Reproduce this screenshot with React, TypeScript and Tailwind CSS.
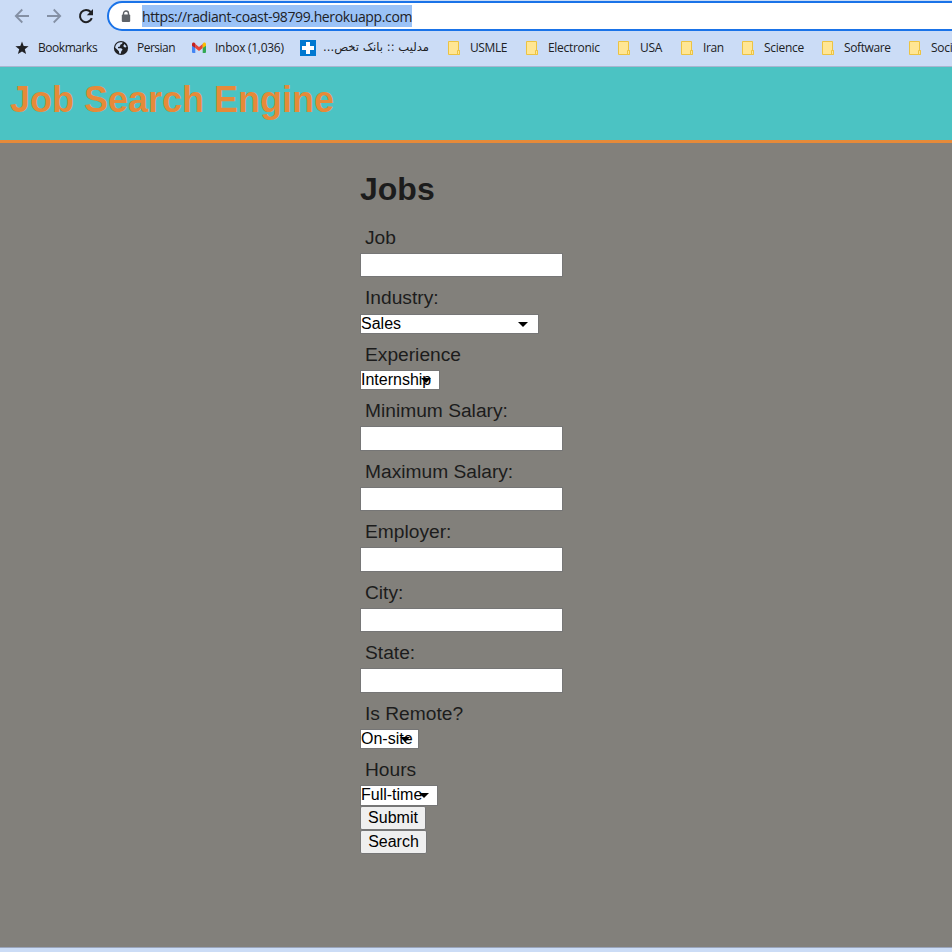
import React from "react";

const folders = [
  { name: "USMLE", cls: "w-[78px]", track: "tracking-[-0.4px]" },
  { name: "Electronic", cls: "w-[92px]", track: "tracking-[-0.3px]" },
  { name: "USA", cls: "w-[63px]", track: "tracking-[-0.3px]" },
  { name: "Iran", cls: "w-[61px]", track: "tracking-[-0.4px]" },
  { name: "Science", cls: "w-[80px]", track: "tracking-[-0.3px]" },
  { name: "Software", cls: "w-[87px]", track: "tracking-[-0.4px]" },
  { name: "Soci", cls: "w-[43px]", track: "tracking-[-0.3px]" },
];

function FolderIcon() {
  return (
    <svg width="13" height="14" viewBox="0 0 13 14" className="shrink-0">
      <path d="M.5 .5h10v9h1v4H.5z" fill="#ffe694" stroke="#ecc342" />
      <path d="M9.5 13.5v-4h2v4z" fill="#ffe694" stroke="#ecc342" />
    </svg>
  );
}

function BrowserBar() {
  return (
    <div className="h-[67px] shrink-0 overflow-hidden border-b border-[#a9b5cf] bg-[#cbdcf6] font-['Open_Sans','Noto_Sans',sans-serif] text-[#202124]">
      <div className="flex h-8 items-center pl-[14px]">
        <svg className="shrink-0" width="16" height="16" viewBox="0 0 16 16" fill="none" stroke="#8490a4" strokeWidth="1.8">
          <path d="M15 8H2M8.3 1.5 1.8 8l6.5 6.5" />
        </svg>
        <svg className="ml-4 shrink-0" width="16" height="16" viewBox="0 0 16 16" fill="none" stroke="#8490a4" strokeWidth="1.8">
          <path d="M1 8h13M7.7 1.5 14.2 8l-6.5 6.5" />
        </svg>
        <svg className="ml-4 shrink-0" width="16" height="16" viewBox="0 0 16 16" fill="none">
          <path d="M13.8 10.2A6.1 6.1 0 1 1 12.7 4L14 5.5" stroke="#202124" strokeWidth="2" />
          <path d="M15 1v6.2H8.8z" fill="#202124" />
        </svg>
        <div className="ml-[13px] flex h-[30px] w-[1000px] shrink-0 items-center rounded-full border-2 border-[#1a73e8] bg-white pl-3">
          <svg className="shrink-0" width="10" height="13" viewBox="0 0 10 13">
            <path d="M2.5 5V3.5a2.5 2.5 0 0 1 5 0V5" fill="none" stroke="#5f6368" strokeWidth="1.4" />
            <rect x=".8" y="4.5" width="8.4" height="7.5" rx="1" fill="#5f6368" />
          </svg>
          <span className="ml-[11px] flex h-[22px] w-[270px] items-center bg-[#9ac2f7] text-[14px] tracking-[-0.37px] whitespace-nowrap">
            https://radiant-coast-98799.herokuapp.com
          </span>
        </div>
      </div>
      <div className="flex h-8 items-center pl-[15px] text-[12px] whitespace-nowrap">
        <svg width="14" height="14" viewBox="0 0 14 14" className="shrink-0">
          <path d="m7 .6 1.7 4.5 4.9.2-3.8 3 1.3 4.8L7 10.4l-4.1 2.7 1.3-4.8-3.8-3 4.9-.2z" fill="#202124" />
        </svg>
        <span className="ml-[9px] w-[75px] shrink-0 tracking-[-0.45px]">Bookmarks</span>
        <svg width="16" height="16" viewBox="0 0 16 16" className="shrink-0">
          <circle cx="8" cy="8" r="7.1" fill="#202124" />
          <path d="M7.500 2.300h2l-.3 1.500-1.900.9-.3 1.900-2 .4v1.300h3.300l1.300 1.400-1.200 1.300-.7 2.800-1.500-.4-.3-2.200L3.900 9.200 2.200 7.800C2.300 4.900 4.500 2.600 7.500 2.300zM11.500 4l2 2.400-.7 1.100-2-.4-.4-1.600z" fill="#cbdcf6" />
        </svg>
        <span className="ml-2 w-[55px] shrink-0 tracking-[-0.5px]">Persian</span>
        <svg width="14" height="12" viewBox="0 0 14 12" className="shrink-0">
          <path d="M0 2h3.3v9H1a1 1 0 0 1-1-1z" fill="#4285f4" />
          <path d="M10.7 2H14v8a1 1 0 0 1-1 1h-2.300z" fill="#34a853" />
          <path d="M3.300 2 7 5l3.700-3v4L7 9 3.300 6z" fill="#ea4335" />
          <path d="M0 2.100C0 .6 1.600 0 2.700 1l.6.500V6L0 3.700z" fill="#c5221f" />
          <path d="M14 2.100C14 .6 12.400 0 11.300 1l-.6.500V6L14 3.700z" fill="#fbbc04" />
        </svg>
        <span className="ml-[9px] w-[85px] shrink-0 tracking-[-0.28px]">Inbox (1,036)</span>
        <svg width="16" height="16" viewBox="0 0 16 16" className="shrink-0">
          <path fill="#0078d0" d="M0 0h16v16H0z" />
          <path fill="#fff" d="M6 2h4v4h4v4h-4v4H6v-4H2V6h4z" />
        </svg>
        <span dir="rtl" className="ml-2 w-[105px] shrink-0 text-right font-['DejaVu_Sans',sans-serif] text-[11.600px]">
          مدلیب :: بانک تخص...
        </span>
        <div className="ml-[19px] flex">
          {folders.map((f) => (
            <div key={f.name} className={"flex shrink-0 items-center " + f.cls}>
              <FolderIcon />
              <span className={"ml-[9px] " + f.track}>{f.name}</span>
            </div>
          ))}
        </div>
      </div>
    </div>
  );
}

type FieldDef = { label: string; height: string; box: string; value?: string; arrow?: string };

const fields: FieldDef[] = [
  { label: "Job", height: "h-[61px]", box: "w-[203px] h-[24px]" },
  { label: "Industry:", height: "h-[56px]", box: "w-[179px] h-[20px]", value: "Sales", arrow: "right-[10px]" },
  { label: "Experience", height: "h-[56px]", box: "w-[80px] h-[20px]", value: "Internship", arrow: "right-[8px]" },
  { label: "Minimum Salary:", height: "h-[61px]", box: "w-[203px] h-[25px]" },
  { label: "Maximum Salary:", height: "h-[60px]", box: "w-[203px] h-[24px]" },
  { label: "Employer:", height: "h-[61px]", box: "w-[203px] h-[25px]" },
  { label: "City:", height: "h-[60px]", box: "w-[203px] h-[24px]" },
  { label: "State:", height: "h-[61px]", box: "w-[203px] h-[25px]" },
  { label: "Is Remote?", height: "h-[56px]", box: "w-[59px] h-[20px]", value: "On-site", arrow: "right-[8px]" },
  { label: "Hours", height: "h-[48px]", box: "w-[78px] h-[21px]", value: "Full-time", arrow: "right-[8px]" },
];

function Field({ label, height, box, value, arrow }: FieldDef) {
  const leading = label === "Industry:" ? "leading-[22px]" : "leading-[24px]";
  return (
    <div className={height}>
      <label className={"mb-[5px] block h-[22px] pl-[5px] text-[19.2px] " + leading}>{label}</label>
      <div className={"relative border border-[#767676] bg-white text-[16px] leading-[17px] text-black " + box}>
        {value}
        {arrow && (
          <svg className={"absolute top-[7px] " + arrow} width="10" height="5" viewBox="0 0 10 5">
            <path d="M0 0h10L5 5z" />
          </svg>
        )}
      </div>
    </div>
  );
}

export default function App() {
  return (
    <div className="flex h-[952px] w-[952px] flex-col overflow-hidden bg-[#82807b] font-['Liberation_Sans',Arial,sans-serif] text-[#1c1c1c]">
      <BrowserBar />
      <header className="h-[76px] shrink-0 border-b-[3px] border-[#e68a39] bg-[#4bc3c3] pt-3 pl-[10px]">
        <h1 className="text-[36px] leading-[41px] font-bold text-[#e68a39]">Job Search Engine</h1>
      </header>
      <main className="flex-1 pl-[360px]">
        <h2 className="h-[83px] pt-[28px] text-[32px] leading-[37px] font-bold">Jobs</h2>
        {fields.map((f) => (
          <Field key={f.label} {...f} />
        ))}
        <div className="flex flex-col items-start text-[16px] leading-[20px] text-black">
          <button className="h-6 w-[66px] rounded-[2px] border border-[#767676] bg-[#efefef]">Submit</button>
          <button className="h-6 w-[67px] rounded-[2px] border border-[#767676] bg-[#efefef]">Search</button>
        </div>
      </main>
      <footer className="h-[5px] shrink-0 border-t border-[#9aa5bb] bg-[#cbdcf6]" />
    </div>
  );
}
